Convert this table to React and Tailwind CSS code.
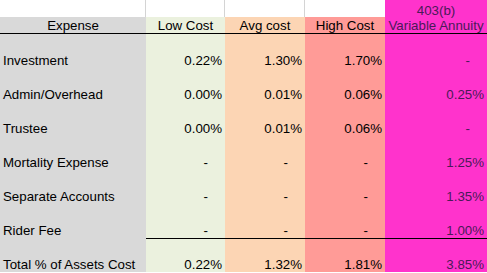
import React from 'react';

const cols = [
  { bg: 'bg-[#d9d9d9]' },
  { bg: 'bg-[#ebf1de]' },
  { bg: 'bg-[#fcd5b4]' },
  { bg: 'bg-[#ff9b97]' },
  { bg: 'bg-[#ff33cc]' },
];

const rows = [
  ['Investment', '0.22%', '1.30%', '1.70%', '-'],
  ['Admin/Overhead', '0.00%', '0.01%', '0.06%', '0.25%'],
  ['Trustee', '0.00%', '0.01%', '0.06%', '-'],
  ['Mortality Expense', '-', '-', '-', '1.25%'],
  ['Separate Accounts', '-', '-', '-', '1.35%'],
  ['Rider Fee', '-', '-', '-', '1.00%'],
];

const total = ['Total % of Assets Cost', '0.22%', '1.32%', '1.81%', '3.85%'];

function Cell({ value, col, line }) {
  const isDash = value === '-';
  const txt = col === 4 ? 'text-[#4b1a58]' : 'text-black';
  const border = line && col > 0 ? 'border-t border-black' : '';
  if (col === 0) {
    return (
      <div className={`h-[34px] flex items-end pl-[3px] ${cols[0].bg}`}>
        <span className="leading-[15px]">{value}</span>
      </div>
    );
  }
  return (
    <div className={`h-[34px] flex items-end justify-end ${isDash ? 'pr-[17px]' : 'pr-[3px]'} ${cols[col].bg} ${txt} ${border}`}>
      <span className="leading-[15px]">{value}</span>
    </div>
  );
}

export default function App() {
  return (
    <div
      className="w-[487px] h-[273px] overflow-hidden bg-white text-[13.3px] text-black"
      style={{ fontFamily: '"Liberation Sans", Arial, sans-serif' }}
    >
      <div className="grid grid-cols-[146px_79px_80px_80px_102px]">
        {/* top blank row */}
        <div className="h-[17px] border-r border-[#d4d4d4]" />
        <div className="h-[17px] border-r border-[#d4d4d4]" />
        <div className="h-[17px] border-r border-[#d4d4d4]" />
        <div className="h-[17px]" />
        <div className="row-span-2 h-[34px] bg-[#ff33cc] border-b border-black flex flex-col items-center justify-end text-[#4b1a58]">
          <span className="leading-[15px]">403(b)</span>
          <span className="leading-[15px]">Variable Annuity</span>
        </div>

        {/* header row */}
        {['Expense', 'Low Cost', 'Avg cost', 'High Cost'].map((h, i) => (
          <div key={h} className={`h-[17px] border-b border-black flex items-end justify-center ${cols[i].bg}`}>
            <span className="leading-[15px]">{h}</span>
          </div>
        ))}

        {rows.map((r, ri) =>
          r.map((v, ci) => <Cell key={`${ri}-${ci}`} value={v} col={ci} />)
        )}
        {total.map((v, ci) => <Cell key={`t-${ci}`} value={v} col={ci} line />)}
      </div>
    </div>
  );
}
